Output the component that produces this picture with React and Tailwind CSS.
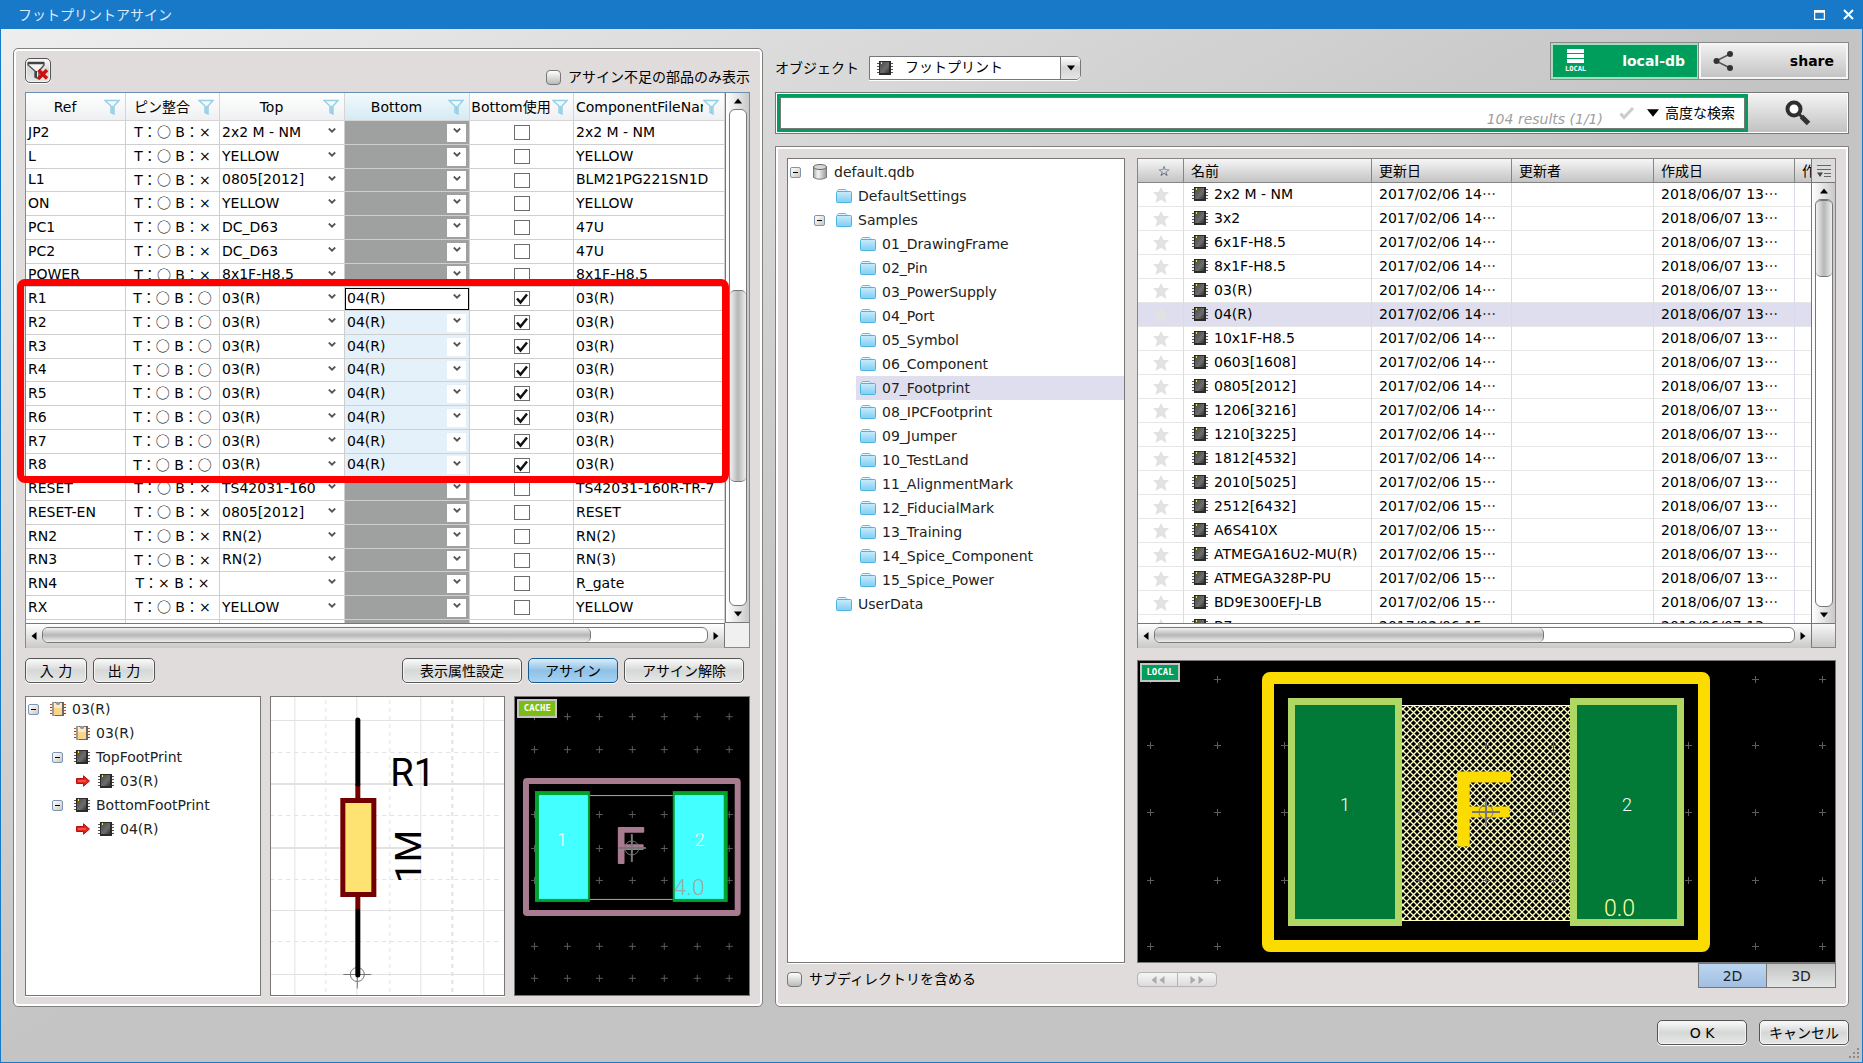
import { useState } from 'react'
import clsx from 'clsx'

const glossy =
  'bg-linear-to-b from-[#fbfbfb] from-0% via-[#d6d8d7] via-50% to-[#e6e8e7] to-100% border border-[#555] rounded-[5px] shadow-[0_1px_0_#fff,inset_0_0_0_1px_#f4f4f4]'

const ng = { pin: ['○', '×'] }

const parts = [
  { ref: 'JP2', top: '2x2 M - NM', file: '2x2 M - NM' },
  { ref: 'L', top: 'YELLOW', file: 'YELLOW' },
  { ref: 'L1', top: '0805[2012]', file: 'BLM21PG221SN1D' },
  { ref: 'ON', top: 'YELLOW', file: 'YELLOW' },
  { ref: 'PC1', top: 'DC_D63', file: '47U' },
  { ref: 'PC2', top: 'DC_D63', file: '47U' },
  { ref: 'POWER', top: '8x1F-H8.5', file: '8x1F-H8.5' },
  ...['R1', 'R2', 'R3', 'R4', 'R5', 'R6', 'R7', 'R8'].map((ref) => ({
    ref,
    pin: ['○', '○'],
    top: '03(R)',
    bottom: '04(R)',
    file: '03(R)',
  })),
  { ref: 'RESET', top: 'TS42031-160', file: 'TS42031-160R-TR-7' },
  { ref: 'RESET-EN', top: '0805[2012]', file: 'RESET' },
  { ref: 'RN2', top: 'RN(2)', file: 'RN(2)' },
  { ref: 'RN3', top: 'RN(2)', file: 'RN(3)' },
  { ref: 'RN4', pin: ['×', '×'], top: '', file: 'R_gate' },
  { ref: 'RX', top: 'YELLOW', file: 'YELLOW' },
  { ref: '', pin: null, top: '', file: '' },
].map((p) => ({ ...ng, ...p }))

const partsTree = [
  { depth: 0, icon: 'part', label: '03(R)', toggle: true },
  { depth: 1, icon: 'part', label: '03(R)' },
  { depth: 1, icon: 'chip', label: 'TopFootPrint', toggle: true },
  { depth: 2, icon: 'chip', label: '03(R)', arrow: true },
  { depth: 1, icon: 'chip', label: 'BottomFootPrint', toggle: true },
  { depth: 2, icon: 'chip', label: '04(R)', arrow: true },
]

const dbTree = [
  { depth: 0, icon: 'db', label: 'default.qdb', toggle: true },
  { depth: 1, icon: 'folder', label: 'DefaultSettings' },
  { depth: 1, icon: 'folder', label: 'Samples', toggle: true },
  ...[
    '01_DrawingFrame',
    '02_Pin',
    '03_PowerSupply',
    '04_Port',
    '05_Symbol',
    '06_Component',
    '07_Footprint',
    '08_IPCFootprint',
    '09_Jumper',
    '10_TestLand',
    '11_AlignmentMark',
    '12_FiducialMark',
    '13_Training',
    '14_Spice_Component',
    '15_Spice_Power',
  ].map((label) => ({ depth: 2, icon: 'folder', label, selected: label === '07_Footprint' })),
  { depth: 1, icon: 'folder', label: 'UserData' },
]

const footprints = [
  ['2x2 M - NM', '14'],
  ['3x2', '14'],
  ['6x1F-H8.5', '14'],
  ['8x1F-H8.5', '14'],
  ['03(R)', '14'],
  ['04(R)', '14'],
  ['10x1F-H8.5', '14'],
  ['0603[1608]', '14'],
  ['0805[2012]', '14'],
  ['1206[3216]', '14'],
  ['1210[3225]', '14'],
  ['1812[4532]', '14'],
  ['2010[5025]', '15'],
  ['2512[6432]', '15'],
  ['A6S410X', '15'],
  ['ATMEGA16U2-MU(R)', '15'],
  ['ATMEGA328P-PU', '15'],
  ['BD9E300EFJ-LB', '15'],
  ['B7', '15'],
]

/* ---------- icons ---------- */

function ChipIcon() {
  return (
    <svg viewBox="0 0 16 16" className="h-4 w-4 shrink-0" aria-hidden="true">
      <defs>
        <linearGradient id="chipFill" x1="0" y1="0" x2="1" y2="1">
          <stop offset="0" stopColor="#4a4a4a" />
          <stop offset="0.6" stopColor="#6c6c6c" />
          <stop offset="1" stopColor="#333" />
        </linearGradient>
      </defs>
      {[3, 6, 9, 12].map((y) => (
        <path key={y} d={`M0 ${y + 0.5}H16`} stroke="#555" />
      ))}
      <rect x="2" y="1" width="12" height="14" fill="#2a2a2a" />
      <rect x="3" y="2" width="9" height="11" fill="url(#chipFill)" />
      <rect x="4" y="2" width="1" height="2" fill="#ffe83a" />
    </svg>
  )
}

function PartIcon() {
  return (
    <svg viewBox="0 0 16 16" className="h-4 w-4 shrink-0" aria-hidden="true">
      {[3, 6, 9, 12].map((y) => (
        <path key={y} d={`M0 ${y + 0.5}H16`} stroke={y % 2 ? '#c8562c' : '#555'} />
      ))}
      <rect x="2" y="1" width="12" height="14" fill="#666" />
      <rect x="2" y="1" width="3" height="14" fill="#9a9a9a" />
      <rect x="4" y="2" width="8" height="12" fill="#fbd58a" />
      <rect x="4" y="2" width="8" height="5" fill="#fdebc8" />
      <path d="M6 1h4v2l-1 1H7L6 3z" fill="#999" />
    </svg>
  )
}

function FolderIcon() {
  return (
    <svg viewBox="0 0 16 16" className="h-4 w-4 shrink-0" aria-hidden="true">
      <defs>
        <linearGradient id="folderFill" x1="0" y1="0" x2="0" y2="1">
          <stop offset="0" stopColor="#c9ecfb" />
          <stop offset="1" stopColor="#7fcdf0" />
        </linearGradient>
      </defs>
      <path d="M1.5 4.5v-2l1-1h7l1 1v2" fill="#e3f6fd" stroke="#5bbde6" />
      <path d="M.5 4.5q0-1 1-1h13q1 0 1 1v9q0 1-1 1h-13q-1 0-1-1z" fill="url(#folderFill)" stroke="#4db4e0" />
    </svg>
  )
}

function DbIcon() {
  return (
    <svg viewBox="0 0 16 16" className="h-4 w-4 shrink-0" aria-hidden="true">
      <defs>
        <linearGradient id="dbFill">
          <stop offset="0" stopColor="#aaa" />
          <stop offset="0.35" stopColor="#f4f4f4" />
          <stop offset="1" stopColor="#999" />
        </linearGradient>
      </defs>
      <path d="M1.5 3v10.5q6.500 3.500 13 0V3z" fill="url(#dbFill)" stroke="#777" />
      <ellipse cx="8" cy="3" rx="6.500" ry="2.500" fill="#d8d8d8" stroke="#666" />
    </svg>
  )
}

const icons = { chip: ChipIcon, part: PartIcon, folder: FolderIcon, db: DbIcon }

function Funnel() {
  return (
    <svg viewBox="0 0 16 16" className="h-4 w-4" aria-hidden="true">
      <path d="M1 1.500h14L10 7v8l-3-1.500V7z" fill="#f4fbfe" stroke="#97cfe8" strokeWidth="1.500" />
      <path d="M8.500 7v7" stroke="#97cfe8" strokeWidth="2" />
    </svg>
  )
}

function Chevron() {
  return (
    <svg viewBox="0 0 8 6" className="h-[6px] w-2" aria-hidden="true">
      <path d="M.8.5 4 3.700 7.200.5" fill="none" stroke="#555" strokeWidth="1.800" />
    </svg>
  )
}

function Star() {
  return (
    <svg viewBox="0 0 16 16" className="mx-auto h-4 w-4" aria-hidden="true">
      <path d="M8 0l2.500 5H16l-4 4.200L13.500 16 8 12.800 2.500 16 4 9.200 0 5h5.500z" fill="#e2e2e2" />
    </svg>
  )
}

function Triangle({ dir, className = 'h-2 w-2' }) {
  const d = {
    up: 'M4 1.500 8 6.500H0z',
    down: 'M4 6.500 0 1.500h8z',
    left: 'M1.500 4 6.500 0v8z',
    right: 'M6.500 4 1.500 0v8z',
  }[dir]
  return (
    <svg viewBox="0 0 8 8" className={className} aria-hidden="true">
      <path d={d} fill="currentColor" />
    </svg>
  )
}

/* ---------- shared widgets ---------- */

function Scrollbar({ vertical, before, size, after }) {
  return (
    <div
      className={clsx(
        'flex items-center text-black',
        vertical
          ? 'min-h-0 flex-1 flex-col border-l border-[#777] bg-linear-to-r from-[#fff] to-[#c9c9c9] px-[3px]'
          : 'h-6 flex-1 bg-linear-to-b from-[#fff] to-[#c9c9c9] py-[3px]',
      )}
    >
      <button type="button" aria-label="前へ" className="flex size-4 shrink-0 items-center justify-center">
        <Triangle dir={vertical ? 'up' : 'left'} />
      </button>
      <div
        className={clsx(
          'flex flex-1 overflow-hidden rounded-[6px] border border-[#777] bg-white',
          vertical ? 'mr-[2px] w-[18px] flex-col self-start' : 'mb-[2px] h-4 self-start',
        )}
      >
        <div style={{ flexGrow: before }} />
        <div
          className={clsx(
            'rounded-[5px] from-[#f2f2f2] via-[#b5b7b6] to-[#eee]',
            vertical ? 'border-y border-[#777] bg-linear-to-r' : 'border-r border-[#777] bg-linear-to-b',
          )}
          style={{ flexGrow: size }}
        />
        <div style={{ flexGrow: after }} />
      </div>
      <button type="button" aria-label="次へ" className="flex size-4 shrink-0 items-center justify-center">
        <Triangle dir={vertical ? 'down' : 'right'} />
      </button>
    </div>
  )
}

function Tree({ items, label, className }) {
  return (
    <ul
      aria-label={label}
      className={clsx('min-h-0 overflow-hidden border border-[#777] bg-white pl-[2px] text-[#222] shadow-[0_1px_0_#fff]', className)}
    >
      {items.map((item, i) => {
        const Icon = icons[item.icon]
        return (
          <li key={i} className={clsx('flex h-6 items-center', item.depth === 1 && 'pl-6', item.depth === 2 && 'pl-12')}>
            <span className="flex w-[18px] shrink-0">
              {item.toggle && (
                <button
                  type="button"
                  aria-label={`${item.label} を閉じる`}
                  className="flex size-[11px] items-center justify-center rounded-[2px] border border-[#7b96b5] bg-linear-to-br from-white to-[#cfc8bd]"
                >
                  <span className="h-px w-[5px] bg-black" />
                </button>
              )}
              {item.arrow && (
                <svg viewBox="0 0 14 12" className="h-3 w-[14px]" aria-hidden="true">
                  <path d="M.5 3.500h7V.8L13.500 6 7.500 11.200V8.500h-7z" fill="#e2231e" stroke="#b80f0f" />
                  <path d="M2 6h8" stroke="#ff7a70" />
                </svg>
              )}
            </span>
            <span className={clsx('flex h-full flex-1 items-center gap-[6px] pl-1 whitespace-nowrap', item.selected && 'bg-[#dedeee]')}>
              <Icon />
              {item.label}
            </span>
          </li>
        )
      })}
    </ul>
  )
}

function GlossCheck({ id, children }) {
  return (
    <div className="flex items-center gap-[7px]">
      <input id={id} type="checkbox" className="size-[15px] appearance-none rounded-[4px] border border-[#777] bg-linear-to-b from-white to-[#bbb] checked:bg-[#5aa0d8]" />
      <label htmlFor={id}>{children}</label>
    </div>
  )
}

function Button({ children, className, primary }) {
  return (
    <button
      type="button"
      className={clsx(
        'h-[25px] leading-5',
        primary
          ? 'rounded-[5px] border border-[#15598f] bg-linear-to-b from-[#d9ecf9] via-[#8fc0e6] to-[#a5d3f2] shadow-[0_1px_0_#fff]'
          : glossy,
        className,
      )}
    >
      {children}
    </button>
  )
}

/* ---------- left pane ---------- */

function Header({ children, active, align = 'text-center' }) {
  return (
    <th
      scope="col"
      className={clsx(
        'h-7 border-r border-b border-[#d5d5d5] bg-linear-to-b p-0 font-normal',
        active ? 'from-[#f2fafd] to-[#d5eaf4]' : 'from-white to-[#eff0f2]',
      )}
    >
      <div className="flex items-center">
        <span className={clsx('flex-1 overflow-hidden whitespace-nowrap', align)}>{children}</span>
        <button type="button" aria-label="フィルター" className="mr-[5px] shrink-0">
          <Funnel />
        </button>
      </div>
    </th>
  )
}

function PinMark({ mark }) {
  return <span className={clsx(mark === '○' && "font-['Noto_Sans_CJK_JP',sans-serif]")}>{mark}</span>
}

function CellSelect({ value, label, boxed, className }) {
  return (
    <div className={clsx('relative flex h-[22px] items-center', className)}>
      <select aria-label={label} defaultValue={value} className="h-full w-full appearance-none pb-[2px] pl-[2px]">
        <option>{value}</option>
      </select>
      <span
        className={clsx(
          'pointer-events-none absolute top-[2px] right-[3px] flex h-[18px] w-[19px] items-center justify-center pb-[3px]',
          boxed && 'bg-white',
        )}
      >
        <Chevron />
      </span>
    </div>
  )
}

function PartRow({ part, focused }) {
  const [used, setUsed] = useState(Boolean(part.bottom))
  const cell = 'border-r border-b border-[#cfcfcf] px-0 pt-0 leading-4'
  return (
    <tr className="h-6 nth-[4n+3]:h-[23px]">
      <td className={clsx(cell, 'pb-[2px] pl-[2px]')}>{part.ref}</td>
      <td className={clsx(cell, 'pb-[2px] text-center whitespace-nowrap')}>
        {part.pin && (
          <>
            T：
            <PinMark mark={part.pin[0]} /> B：
            <PinMark mark={part.pin[1]} />
          </>
        )}
      </td>
      <td className={cell}>
        <CellSelect value={part.top} label={`${part.ref} Top`} />
      </td>
      <td className={clsx(cell, part.bottom ? 'bg-[#e4f1fb]' : 'bg-[#9fa1a0]')}>
        <CellSelect
          value={part.bottom ?? ''}
          label={`${part.ref} Bottom`}
          boxed
          className={clsx(focused && 'bg-white outline-1 -outline-offset-1 outline-black')}
        />
      </td>
      <td className={cell}>
        <label className="relative mx-auto flex h-[15px] w-4">
          <input
            type="checkbox"
            aria-label={`${part.ref} Bottom使用`}
            checked={used}
            onChange={(e) => setUsed(e.target.checked)}
            className="h-[15px] w-4 appearance-none border border-[#6d6d6d] bg-white"
          />
          {used && (
            <svg viewBox="0 0 16 15" className="pointer-events-none absolute inset-0 h-[15px] w-4" aria-hidden="true">
              <path d="M3 7.500 6.500 11.500 13 3.500" fill="none" stroke="#111" strokeWidth="2.500" />
            </svg>
          )}
        </label>
      </td>
      <td className={clsx(cell, 'overflow-hidden pb-[2px] pl-[2px] whitespace-nowrap')}>{part.file}</td>
    </tr>
  )
}

function PartsTable() {
  return (
    <div className="relative flex min-h-0 flex-1 flex-col border border-[#6b8fb3] bg-white">
      <div className="flex min-h-0 flex-1">
        <div className="min-w-0 flex-1 overflow-hidden">
          <table className="w-full table-fixed border-separate border-spacing-0">
            <colgroup>
              <col className="w-[100px]" />
              <col className="w-[94px]" />
              <col className="w-[125px]" />
              <col className="w-[125px]" />
              <col className="w-[104px]" />
              <col />
            </colgroup>
            <thead>
              <tr>
                <Header>Ref</Header>
                <Header>ピン整合</Header>
                <Header>Top</Header>
                <Header active>Bottom</Header>
                <Header>Bottom使用</Header>
                <Header align="pl-[2px] text-left">ComponentFileName</Header>
              </tr>
            </thead>
            <tbody>
              {parts.map((part, i) => (
                <PartRow key={i} part={part} focused={part.ref === 'R1'} />
              ))}
            </tbody>
          </table>
        </div>
        <div className="flex w-6 flex-col border-b border-[#777]">
          <Scrollbar vertical before={181} size={192} after={124} />
        </div>
      </div>
      <div className="flex h-6">
        <div className="flex flex-1 border-t border-r border-[#777]">
          <Scrollbar before={0} size={549} after={117} />
        </div>
        <div className="w-6 bg-[#f0f0f0]" />
      </div>
      {/* callout round R1 - R8 */}
      <div className="pointer-events-none absolute top-[186px] right-5 -left-[9px] h-[204px] rounded-[8px] border-[7px] border-[#ff0000]" />
    </div>
  )
}

function CrossGrid({ xs, ys, color = '#5c5c5c' }) {
  return (
    <g stroke={color}>
      {ys.map((y) => xs.map((x) => <path key={`${x}-${y}`} d={`M${x - 3} ${y + 0.5}h7M${x + 0.5} ${y - 3}v7`} />))}
    </g>
  )
}

function Origin({ x, y, width = 1 }) {
  return (
    <g stroke="#777" fill="none">
      <circle cx={x} cy={y} r="7" />
      <path d={`M${x - 14} ${y}h28`} strokeWidth={width} />
      <path d={`M${x} ${y - 14}v28`} strokeWidth={width} />
    </g>
  )
}

function Badge({ children, className }) {
  return (
    <span
      className={clsx(
        "absolute top-[2px] left-[2px] flex h-[19px] w-10 items-center justify-center border-2 border-[#c4c4c4] font-['DejaVu_Sans_Mono',monospace] text-[9px] leading-none font-bold text-white",
        className,
      )}
    >
      {children}
    </span>
  )
}

const thin = 'Roboto, Liberation Sans, sans-serif'

function SchematicView() {
  return (
    <div className="min-w-0 overflow-hidden border border-[#777] bg-white shadow-[0_1px_0_#fff]">
      <svg viewBox="1 1 233 298" className="h-full w-full" role="img" aria-label="R1 1M">
        <g stroke="#e2e2e2">
          {[24, 86, 150, 213].map((x) => (
            <path key={x} d={`M${x + 0.5} 0V300`} />
          ))}
          {[24, 214, 278].map((y) => (
            <path key={y} d={`M0 ${y + 0.5}H235`} />
          ))}
          <path d="M0 88H235M0 152H235" strokeWidth="2" />
          <g strokeDasharray="4 4">
            <path d="M55.500 4V300M119.500 4V300" />
            <path d="M182 4V300" strokeWidth="2" />
            {[56, 119, 183, 245].map((y) => (
              <path key={y} d={`M0 ${y + 0.5}H230`} />
            ))}
          </g>
        </g>
        <path d="M87.500 88V214" stroke="#720000" strokeWidth="5" />
        <rect x="72.500" y="104.500" width="31" height="94" fill="#ffe372" stroke="#720000" strokeWidth="5" />
        <Origin x={87} y={278.5} />
        <path d="M87.500 24V88M87.500 215V279" stroke="#000" strokeWidth="5" strokeLinecap="round" />
        <text x="120" y="90" fontSize="38" fontFamily="Roboto, sans-serif">
          R1
        </text>
        <text transform="translate(151 187) rotate(-90)" fontSize="37" fontFamily="Roboto, sans-serif">
          1M
        </text>
      </svg>
    </div>
  )
}

function CachedFootprintView() {
  return (
    <div className="relative min-w-0 overflow-hidden border border-[#777] bg-black">
      <svg viewBox="1 1 234 298" className="h-full w-full" role="img" aria-label="03(R)">
        <CrossGrid xs={[20, 53, 85, 118, 150, 183, 215]} ys={[20, 53, 118, 152, 184, 250, 282]} />
        <rect x="12" y="85" width="212" height="132" rx="1" fill="none" stroke="#a87b91" strokeWidth="6" />
        <path d="M76 99.500H159M76 203.500H159" stroke="#aaa" />
        <rect x="21" y="95" width="55" height="111" fill="#00a32e" />
        <rect x="25" y="99" width="49" height="104" fill="#43ffff" />
        <rect x="159" y="95" width="55" height="111" fill="#00a32e" />
        <rect x="161" y="99" width="49" height="104" fill="#43ffff" />
        <text
          x="101"
          y="167"
          fontSize="50"
          fill="#a87b91"
          stroke="#a87b91"
          strokeWidth="2"
          strokeLinejoin="round"
          fontFamily="Liberation Sans, sans-serif"
        >
          F
        </text>
        <Origin x={118} y={152} width={2} />
        <g fill="#fff" fontSize="18" fontWeight="300" fontFamily={thin} textAnchor="middle">
          <text x="48" y="150">
            1
          </text>
          <text x="186" y="150">
            2
          </text>
        </g>
        <text x="160" y="199" fontSize="23" fontWeight="300" fill="#a0a8a8" fontFamily={thin}>
          4.0
        </text>
      </svg>
      <Badge className="bg-[#7bbd16]">CACHE</Badge>
    </div>
  )
}

function LeftPane() {
  return (
    <section className="flex min-h-0 min-w-0 flex-col rounded-[5px] border border-[#808080] bg-[#e0dcdb] pt-[9px] pr-3 pb-[10px] pl-[11px] shadow-[inset_0_0_0_2px_#fff]">
      <div className="flex h-[34px] items-start justify-between">
        <button type="button" aria-label="フィルター解除" className={clsx('flex h-[25px] w-[26px] items-center justify-center', glossy)}>
          <svg viewBox="0 0 22 20" className="h-5 w-[22px]" aria-hidden="true">
            <path d="M1 2h16v2l-5 6v8l-4-2v-6L1 4z" fill="#f4f4f4" stroke="#555" strokeWidth="1.500" />
            <path d="M1 2h16" stroke="#444" strokeWidth="2.500" />
            <path d="M9 10v7" stroke="#444" strokeWidth="2" />
            <path d="M11.500 9 20 17.500M20 9l-8.500 8.500" stroke="#cf1010" strokeWidth="3.500" />
          </svg>
        </button>
        <div className="pt-[9px]">
          <GlossCheck id="missing-only">アサイン不足の部品のみ表示</GlossCheck>
        </div>
      </div>
      <PartsTable />
      <div className="flex items-center justify-between py-[10px] pr-[6px]">
        <div className="flex gap-[6px]">
          <Button className="w-[62px]">入 力</Button>
          <Button className="w-[62px]">出 力</Button>
        </div>
        <div className="flex gap-[6px]">
          <Button className="w-[120px]">表示属性設定</Button>
          <Button primary className="w-[90px]">
            アサイン
          </Button>
          <Button className="w-[120px]">アサイン解除</Button>
        </div>
      </div>
      <div className="mt-[3px] grid h-[300px] shrink-0 grid-cols-3 gap-[9px]">
        <Tree items={partsTree} label="部品構成" />
        <SchematicView />
        <CachedFootprintView />
      </div>
    </section>
  )
}

/* ---------- right pane ---------- */

function ObjectBar() {
  return (
    <div className="flex h-[38px] items-start justify-between">
      <div className="flex h-6 items-center gap-[10px] pt-[26px]">
        <label htmlFor="object">オブジェクト</label>
        <div className="relative flex w-[212px]">
          <select
            id="object"
            className="h-6 w-full appearance-none rounded-r-[5px] border border-[#777] bg-white pb-[2px] pl-[35px] shadow-[0_1px_0_#fff]"
          >
            <option>フットプリント</option>
          </select>
          <span className="pointer-events-none absolute top-1 left-2">
            <ChipIcon />
          </span>
          <span className="pointer-events-none absolute top-px right-px flex h-[22px] w-5 items-center justify-center rounded-r-[4px] border-l border-[#777] bg-linear-to-b from-white via-[#d4d4d4] to-[#e6e6e6]">
            <Triangle dir="down" />
          </span>
        </div>
      </div>
      <div className="flex h-[38px] border border-[#888] font-bold">
        <button type="button" className="flex w-[148px] items-center justify-between border-2 border-[#a5dcc2] bg-[#009e5d] px-3 text-white">
          <span className="flex flex-col items-center gap-[3px]">
            <svg viewBox="0 0 17 14" className="h-[14px] w-[17px]" aria-hidden="true">
              <path d="M0 2h17M0 7h17M0 12h17" stroke="#fff" strokeWidth="4" />
            </svg>
            <span className="font-['DejaVu_Sans_Mono',monospace] text-[7px] leading-[7px]">LOCAL</span>
          </span>
          local-db
        </button>
        <button
          type="button"
          className="flex w-[149px] items-center justify-between border-2 border-[#f6f6f6] bg-linear-to-b from-[#f0f0f0] to-[#c4c4c4] px-3 shadow-[-1px_0_0_#888]"
        >
          <svg viewBox="0 0 20 20" className="h-5 w-5" aria-hidden="true">
            <path d="M17 3 3 10l14 7" fill="none" stroke="#555" strokeWidth="1.500" />
            <g fill="#333">
              <circle cx="17" cy="3" r="3" />
              <circle cx="3.500" cy="10" r="3" />
              <circle cx="17" cy="17" r="3" />
            </g>
          </svg>
          share
        </button>
      </div>
    </div>
  )
}

function SearchBar() {
  return (
    <form className="mt-3 flex h-[42px] border border-[#777] bg-white p-px" onSubmit={(e) => e.preventDefault()}>
      <div className="flex flex-1 border-[3px] border-[#009e5d]">
        <div className="flex flex-1 items-center border border-[#777] bg-white pr-[9px]">
          <input type="text" aria-label="検索" className="h-full min-w-0 flex-1 px-2 outline-none" />
          <output className="mt-3 mr-4 text-[#a0a0a0] italic">104 results (1/1)</output>
          <svg viewBox="0 0 16 13" className="mr-3 h-[13px] w-4" aria-hidden="true">
            <path d="M1.500 6.500 5 10.500 14 1" fill="none" stroke="#ccc" strokeWidth="3" />
          </svg>
          <button type="button" className="flex items-center gap-[6px]">
            <Triangle dir="down" className="h-3 w-3" />
            高度な検索
          </button>
        </div>
      </div>
      <button
        type="submit"
        aria-label="検索する"
        className="flex w-[99px] items-center justify-center bg-linear-to-b from-[#f4f4f4] to-[#c2c2c2]"
      >
        <svg viewBox="0 0 26 26" className="h-[26px] w-[26px]" aria-hidden="true">
          <circle cx="9" cy="9" r="6.500" fill="#fff" stroke="#2f2f2f" strokeWidth="4" />
          <path d="M14 14l3.500 3.500" stroke="#333" strokeWidth="3" />
          <path d="M16.500 16.500l7 7" stroke="#333" strokeWidth="5" />
        </svg>
      </button>
    </form>
  )
}

function Ellipsed({ children }) {
  return (
    <>
      {children}
      <span className="font-['Noto_Sans_CJK_JP',sans-serif] leading-5">…</span>
    </>
  )
}

function FootprintTable() {
  const th = 'h-6 border-r border-b border-[#858585] bg-linear-to-b from-[#f6f6f6] to-[#c4c4c4] p-0 pl-[7px] font-normal whitespace-nowrap overflow-hidden leading-5'
  const td = 'h-6 border-r border-b border-r-[#dad8ee] border-b-[#e6e6e6] pt-0 pr-0 pb-[2px] pl-[7px] whitespace-nowrap leading-5 overflow-hidden'
  return (
    <div className="flex min-h-0 flex-1 flex-col border border-[#858585] bg-white">
      <div className="flex min-h-0 flex-1">
        <div className="min-w-0 flex-1 overflow-hidden">
          <table className="w-full table-fixed border-separate border-spacing-0">
            <colgroup>
              <col className="w-[46px]" />
              <col className="w-[188px]" />
              <col className="w-[140px]" />
              <col className="w-[142px]" />
              <col className="w-[141px]" />
              <col />
            </colgroup>
            <thead>
              <tr>
                <th scope="col" className={clsx(th, 'text-center')}>☆</th>
                <th scope="col" className={clsx(th, 'text-left')}>名前</th>
                <th scope="col" className={clsx(th, 'text-left')}>更新日</th>
                <th scope="col" className={clsx(th, 'text-left')}>更新者</th>
                <th scope="col" className={clsx(th, 'text-left')}>作成日</th>
                <th scope="col" className={clsx(th, 'border-r-0 text-left')}>作成者</th>
              </tr>
            </thead>
            <tbody>
              {footprints.map(([name, hour]) => (
                <tr key={name} className={clsx(name === '04(R)' && 'bg-[#dedeee]')}>
                  <td className="h-6 border-r border-b border-r-[#dad8ee] border-b-[#e6e6e6] p-0">
                    <Star />
                  </td>
                  <td className={td}>
                    <span className="flex items-center gap-[6px] pl-px">
                      <ChipIcon />
                      {name}
                    </span>
                  </td>
                  <td className={td}>
                    <Ellipsed>2017/02/06 {hour}</Ellipsed>
                  </td>
                  <td className={td} />
                  <td className={td}>
                    <Ellipsed>2018/06/07 13</Ellipsed>
                  </td>
                  <td className={clsx(td, 'border-r-0')} />
                </tr>
              ))}
            </tbody>
          </table>
        </div>
        <div className="flex w-6 flex-col">
          <button
            type="button"
            aria-label="列の設定"
            className="flex h-6 items-center justify-center border-b border-l border-[#777] bg-[#dcdcdc]"
          >
            <svg viewBox="0 0 14 14" className="h-[14px] w-[14px]" aria-hidden="true">
              <path d="M0 1.500h14M0 5.500h14M7 9.500h7M7 12.500h7" stroke="#666" />
              <path d="M0 8.500h6L3 13z" fill="#444" />
            </svg>
          </button>
          <Scrollbar vertical before={0} size={76} after={334} />
        </div>
      </div>
      <div className="flex h-6 border-t border-[#777]">
        <Scrollbar before={0} size={390} after={252} />
        <div className="w-6 border-l border-[#777] bg-linear-to-b from-[#f8f8f8] to-[#c8c8c8]" />
      </div>
    </div>
  )
}

function LocalFootprintView() {
  const xs = [-5, -4, -3, -2, -1, 0, 1, 2, 3, 4, 5].map((k) => 349 + Math.round(k * 67.2))
  return (
    <div className="relative h-[303px] shrink-0 overflow-hidden border border-[#777] bg-black">
      <svg viewBox="1 1 697 301" className="h-full w-full" role="img" aria-label="04(R)">
        <defs>
          <pattern id="hatch" width="7" height="7" patternUnits="userSpaceOnUse">
            <path d="M-1-1 8 8M8-1-1 8" stroke="#ffffc0" strokeWidth="1.300" />
          </pattern>
        </defs>
        <rect x="265" y="45" width="168" height="215" fill="url(#hatch)" />
        <path d="M265 45.500H433M265 260.500H433" stroke="#ffffc0" />
        <CrossGrid xs={xs} ys={[19, 85, 152, 220, 286]} />
        <rect x="131" y="18" width="436" height="268" rx="2" fill="none" stroke="#fcdb00" strokeWidth="12" />
        <g fill="#007a36" stroke="#b0d664" strokeWidth="7">
          <rect x="154.500" y="41.500" width="107" height="221" />
          <rect x="436.500" y="41.500" width="107" height="221" />
        </g>
        <text
          x="313"
          y="185"
          fontSize="104"
          fill="#fcdb00"
          stroke="#fcdb00"
          strokeWidth="3"
          strokeLinejoin="round"
          fontFamily="Liberation Sans, sans-serif"
        >
          F
        </text>
        <Origin x={349} y={152} width={2} />
        <g fill="#fff" fontSize="18" fontWeight="300" fontFamily={thin} textAnchor="middle">
          <text x="208" y="151">
            1
          </text>
          <text x="490" y="151">
            2
          </text>
        </g>
        <text x="467" y="256" fontSize="23" fontWeight="300" fill="#ffffa0" fontFamily={thin}>
          0.0
        </text>
      </svg>
      <Badge className="bg-[#009e5d]">LOCAL</Badge>
    </div>
  )
}

function RightPane() {
  return (
    <div className="flex min-h-0 min-w-0 flex-col">
      <ObjectBar />
      <SearchBar />
      <section className="mt-3 flex min-h-0 flex-1 gap-3 rounded-b-[5px] border border-[#808080] bg-[#e0dcdb] pt-[11px] pr-3 pb-[17px] pl-[11px] shadow-[inset_0_0_0_2px_#fff]">
        <div className="flex w-[338px] shrink-0 flex-col">
          <div className="grid min-h-0 flex-1">
            <Tree items={dbTree} label="ディレクトリ" className="pt-px" />
          </div>
          <div className="mt-[6px] flex h-5 items-center">
            <GlossCheck id="subdirs">サブディレクトリを含める</GlossCheck>
          </div>
        </div>
        <div className="flex min-w-0 flex-1 flex-col">
          <FootprintTable />
          <div className="h-3 shrink-0" />
          <LocalFootprintView />
          <div className="flex h-[26px] shrink-0 items-start justify-between">
            <div className="mt-[9px] flex h-[15px] overflow-hidden rounded-[4px] border border-[#b4b4b4] bg-linear-to-b from-[#f6f6f6] to-[#dcdcdc] text-[#aaa]">
              <button type="button" aria-label="前のページ" className="flex w-10 items-center justify-center border-r border-[#b4b4b4]">
                <Triangle dir="left" />
                <Triangle dir="left" />
              </button>
              <button type="button" aria-label="次のページ" className="flex w-[38px] items-center justify-center">
                <Triangle dir="right" />
                <Triangle dir="right" />
              </button>
            </div>
            <div className="flex h-[25px] border border-[#777] text-[#222]">
              <button type="button" className="w-[68px] border-r border-[#777] bg-linear-to-b from-[#bcd6f0] to-[#a1bfe2]">
                2D
              </button>
              <button type="button" className="w-[68px] bg-linear-to-b from-[#c2c4c3] to-[#e4e6e5]">
                3D
              </button>
            </div>
          </div>
        </div>
      </section>
    </div>
  )
}

export default function App() {
  return (
    <div className="flex h-screen flex-col bg-[#1979c9] font-['DejaVu_Sans','Noto_Sans_CJK_JP',sans-serif] text-sm text-black" lang="ja">
      <header className="flex h-[29px] shrink-0 items-center justify-between pr-[9px] pl-[18px] text-[#d9ecfb]">
        <h1>フットプリントアサイン</h1>
        <div className="flex items-center gap-[18px]">
          <button type="button" aria-label="最大化">
            <svg viewBox="0 0 11 10" className="h-[10px] w-[11px]" aria-hidden="true">
              <path d="M.5.5h10v9H.5zM.5 2h10" fill="none" stroke="#fff" strokeWidth="1.500" />
            </svg>
          </button>
          <button type="button" aria-label="閉じる">
            <svg viewBox="0 0 11 11" className="h-[11px] w-[11px]" aria-hidden="true">
              <path d="M1 1l9 9M10 1l-9 9" stroke="#fff" strokeWidth="2" />
            </svg>
          </button>
        </div>
      </header>
      <main className="mx-px mb-px flex min-h-0 flex-1 flex-col bg-linear-to-br from-[#eeeeee] via-[#c4c4c4] via-50% to-[#c4c4c4] pr-[13px] pl-3">
        <div className="grid min-h-0 flex-1 grid-cols-[750fr_1074fr] gap-3 pt-[13px]">
          <div className="grid min-h-0 min-w-0 pt-[6px]">
            <LeftPane />
          </div>
          <RightPane />
        </div>
        <footer className="relative flex h-[55px] shrink-0 justify-end gap-3 pt-[13px]">
          <Button className="w-[90px]">O K</Button>
          <Button className="w-[90px]">キャンセル</Button>
          <svg viewBox="0 0 11 11" className="absolute right-[-10px] bottom-[3px] h-[11px] w-[11px]" aria-hidden="true">
            <path d="M9 1h2M9 5h2M5 5h2M9 9h2M5 9h2M1 9h2" stroke="#8a8a8a" strokeWidth="2" />
          </svg>
        </footer>
      </main>
    </div>
  )
}
